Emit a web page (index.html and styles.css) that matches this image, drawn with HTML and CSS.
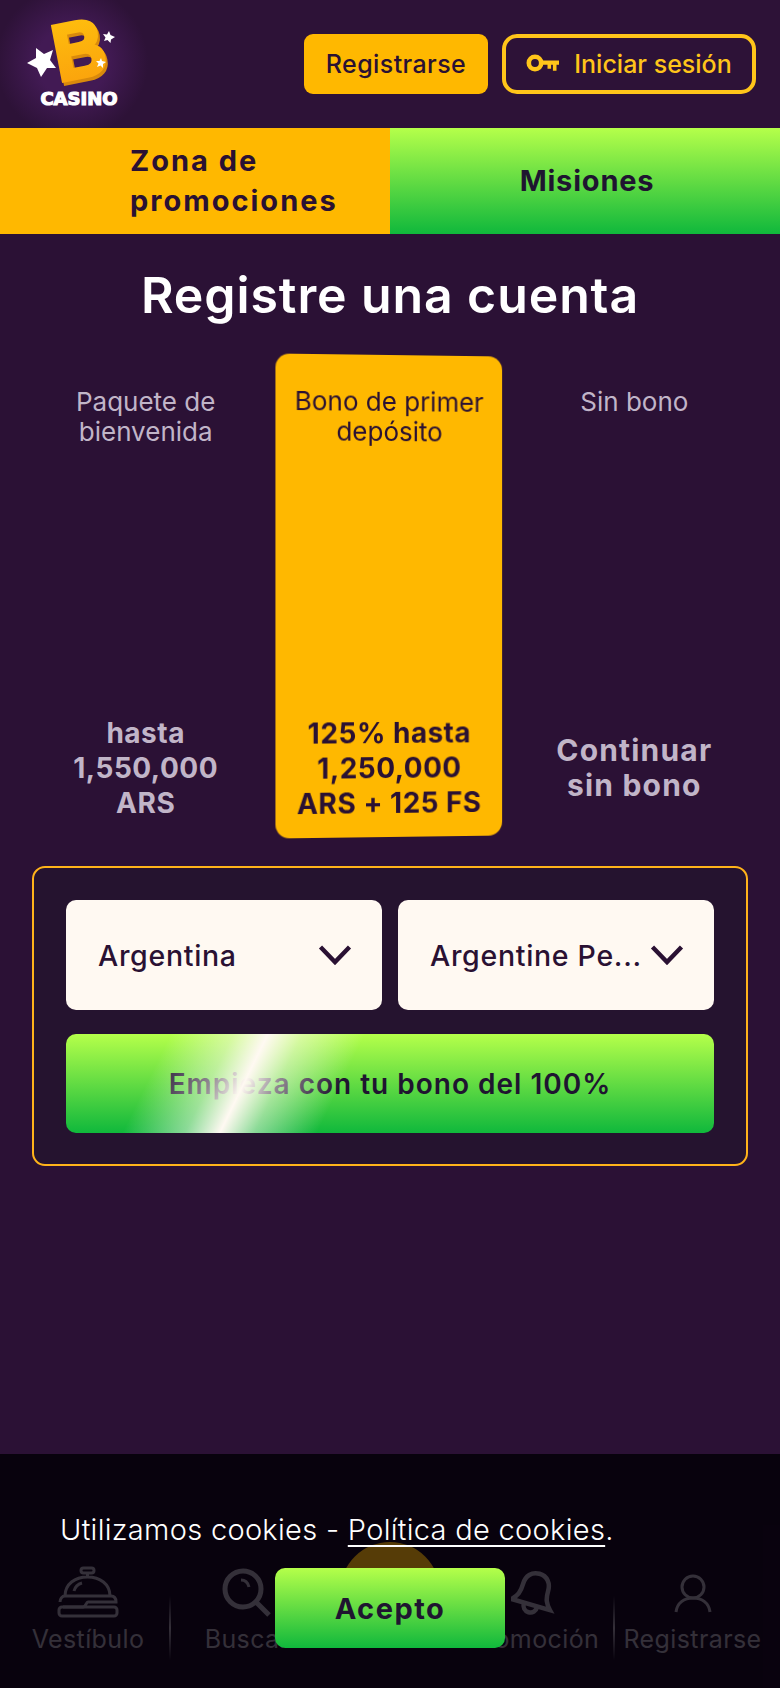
FILE: index.html
```html
<!DOCTYPE html>
<html lang="es">
<head>
<meta charset="utf-8">
<title>Registre una cuenta</title>
<link rel="stylesheet" href="styles.css">
</head>
<body>
<div class="page">
  <header class="header">
    <div class="logo">
      <svg width="150" height="128" viewBox="0 0 150 128" aria-label="B Casino">
        <defs>
          <linearGradient id="bfill" x1="0" y1="0" x2="0" y2="1">
            <stop offset="0" stop-color="#ffc20e"/>
            <stop offset="1" stop-color="#fa9f0c"/>
          </linearGradient>
        </defs>
        <text class="logo-b logo-b-side" text-anchor="middle" y="28" transform="translate(81 52) rotate(-11) scale(.9 1)">B</text>
        <text class="logo-b logo-b-face" text-anchor="middle" y="28" transform="translate(79 49) rotate(-11) scale(.9 1)" fill="url(#bfill)" stroke="url(#bfill)">B</text>
        <polygon class="star" points="36,48 44,54 53,50 50,60 56,68 47,68 41,77 37,68 27,63 36,58"/>
        <polygon class="star" points="109,31 110.500,35 115,37 111,39.500 110.500,43 107.500,40 104,41 105.500,37.500 103,34 107,34.500"/>
        <polygon class="star" points="101,58 102,61 106,62 103,64 103,68 100.500,65.500 97,67 98.500,63.500 96,61 99.500,61"/>
        <text class="logo-word" x="79" y="104.500" text-anchor="middle">CASINO</text>
      </svg>
    </div>
    <div class="auth">
      <a class="btn btn-register">Registrarse</a>
      <a class="btn btn-login">
        <svg class="key" width="34" height="20" viewBox="0 0 34 20"><circle cx="9" cy="9" r="6.200" fill="none" stroke="currentColor" stroke-width="4.600"/><path d="M15 6.500h18v4.200h-2.500v6h-3.600v-6h-1.800v4h-3.600v-4H15z" fill="currentColor"/></svg>
        <span>Iniciar sesión</span>
      </a>
    </div>
  </header>

  <nav class="tabs">
    <a class="tab tab-promo"><span class="tab-label">Zona de promociones</span></a>
    <a class="tab tab-missions"><span>Misiones</span></a>
  </nav>

  <main class="main">
    <h1 class="title">Registre una cuenta</h1>
    <section class="bonuses">
      <article class="bonus">
        <h2 class="bonus-name">Paquete de bienvenida</h2>
        <p class="bonus-value">hasta 1,550,000 ARS</p>
      </article>
      <article class="bonus bonus-active">
        <h2 class="bonus-name">Bono de primer depósito</h2>
        <p class="bonus-value">125% hasta 1,250,000 ARS + 125 FS</p>
      </article>
      <article class="bonus">
        <h2 class="bonus-name">Sin bono</h2>
        <p class="bonus-value bonus-value-wide">Continuar<br>sin bono</p>
      </article>
    </section>
    <section class="form">
      <div class="selects">
        <div class="select"><span class="select-text">Argentina</span>
          <svg class="chevron" width="34" height="22" viewBox="0 0 34 22"><path d="M2.500 3 17 18 31.500 3" fill="none" stroke="currentColor" stroke-width="4.400"/></svg>
        </div>
        <div class="select"><span class="select-text">Argentine Pe...</span>
          <svg class="chevron" width="34" height="22" viewBox="0 0 34 22"><path d="M2.500 3 17 18 31.500 3" fill="none" stroke="currentColor" stroke-width="4.400"/></svg>
        </div>
      </div>
      <a class="cta">Empieza con tu bono del 100%</a>
    </section>
  </main>

  <nav class="bottom-nav">
    <a class="nav-item nav-first">
      <svg width="62" height="52" viewBox="0 0 62 52" fill="none" stroke="currentColor" stroke-width="3"><rect x="24" y="2" width="13" height="5" rx="2.500"/><path d="M30.500 7v4M8 30c0-12 10-19 22.500-19S53 18 53 30"/><path d="M3 36c0-3 2-6 5-6h46c3 0 5 2 5 6H31c-2 0-2 5-5 5H6"/><rect x="2" y="41" width="58" height="9" rx="3"/><path d="M17 25c1-4 4-7 8-8"/></svg>
      <span>Vestíbulo</span>
    </a>
    <a class="nav-item nav-sep">
      <svg width="50" height="50" viewBox="0 0 50 50" fill="none" stroke="currentColor" stroke-width="5"><circle cx="21" cy="21" r="18"/><path d="M34 34 47 47"/><path d="M19 12c4 0 7 3 8 7" stroke-width="3"/></svg>
      <span>Buscar</span>
    </a>
    <a class="nav-item nav-center"><i class="nav-disc"></i></a>
    <a class="nav-item">
      <svg width="46" height="50" viewBox="0 0 46 50" fill="none" stroke="currentColor" stroke-width="4.500"><g transform="rotate(16 23 25)"><path d="M23 5c-8 0-13 6-13 14 0 9-2 13-7 18h40c-5-5-7-9-7-18 0-8-5-14-13-14z"/><path d="M16 37c0 5 3 8 7 8s7-3 7-8"/></g></svg>
      <span>Promoción</span>
    </a>
    <a class="nav-item nav-sep nav-last">
      <svg class="nav-user" width="38" height="40" viewBox="0 0 38 40" fill="none" stroke="currentColor" stroke-width="3"><circle cx="19" cy="13" r="11"/><path d="M2 38c1-9 8-14 17-14s16 5 17 14"/></svg>
      <span>Registrarse</span>
    </a>
  </nav>

  <aside class="cookies">
    <p class="cookies-text">Utilizamos cookies - <a class="cookies-link">Política de cookies</a>.</p>
    <a class="cookies-accept">Acepto</a>
  </aside>
</div>
</body>
</html>
```
FILE: styles.css
```css
* { box-sizing: border-box; }
html, body { margin: 0; padding: 0; }
body {
  background: #2d1237;
  font-family: Inter, "Noto Sans", "Liberation Sans", sans-serif;
  color: #2a1133;
}
.page {
  position: relative;
  width: 780px;
  height: 1688px;
  overflow: hidden;
  background: #2b1135;
}

/* header */
.header {
  height: 128px;
  display: flex;
  align-items: center;
  justify-content: space-between;
  padding-right: 24px;
  background: #2d1237;
}
.logo {
  width: 150px;
  height: 128px;
  background: radial-gradient(circle at 72px 62px, #421a54 0, #421a54 35px, rgba(66, 26, 84, 0) 76px);
}
.logo svg { display: block; }
.logo-b {
  font-family: "Liberation Sans", sans-serif;
  font-weight: 700;
  font-size: 80px;
}
.logo-b-side { fill: #d98a0c; stroke: #d98a0c; stroke-width: 4; }
.logo-b-face { stroke-width: 4; }
.star { fill: #fff; }
.logo-word {
  font-family: "DejaVu Sans", sans-serif;
  font-weight: 700;
  font-size: 18px;
  fill: #fff;
  stroke: #fff;
  stroke-width: 1.200;
}
.auth { display: flex; gap: 14px; }
.btn {
  height: 60px;
  display: flex;
  align-items: center;
  justify-content: center;
  font-size: 25px;
  font-weight: 500;
}
.btn-register {
  width: 184px;
  border-radius: 9px;
  background: #ffb800;
  color: #2a1133;
  letter-spacing: .4px;
}
.btn-login {
  width: 254px;
  gap: 14px;
  border: 4px solid #ffc51a;
  border-radius: 15px;
  color: #ffc51a;
}
.key { display: block; }

/* tabs */
.tabs { display: flex; height: 106px; }
.tab {
  flex: 0 0 50%;
  display: flex;
  align-items: center;
  font-size: 29px;
  font-weight: 700;
  line-height: 40px;
  letter-spacing: .8px;
  color: #2a1133;
}
.tab-promo { padding-left: 130px; background: #ffb800; }
.tab-label { width: 230px; letter-spacing: 2px; }
.tab-missions {
  justify-content: center;
  padding-left: 4px;
  background: linear-gradient(180deg, #b5ff4a 0%, #10b83c 100%);
  color: #1f1530;
}

/* main */
.main { padding: 0 32px; }
.title {
  margin: 0;
  height: 121px;
  display: flex;
  align-items: center;
  justify-content: center;
  font-size: 50px;
  font-weight: 600;
  letter-spacing: .9px;
  color: #fff;
}
.bonuses {
  display: grid;
  grid-template-columns: repeat(3, minmax(0, 1fr));
  gap: 17px;
  height: 482px;
}
.bonus {
  display: flex;
  flex-direction: column;
  align-items: center;
  padding: 32px 14px 16px;
  border-radius: 14px;
  text-align: center;
  color: #c1b5c8;
}
.bonus-active {
  background: #ffb800;
  color: #2a1133;
  transform: perspective(1000px) rotateY(3.2deg);
}
.bonus-name {
  margin: 0;
  font-size: 26px;
  font-weight: 400;
  line-height: 30px;
}
.bonus-value {
  margin: auto 0 0;
  height: 106px;
  display: flex;
  align-items: center;
  font-size: 28px;
  font-weight: 700;
  line-height: 35px;
  letter-spacing: .5px;
}
.bonus-value-wide {
  font-size: 30px;
  letter-spacing: 1.200px;
}

/* form */
.form {
  margin-top: 29px;
  height: 300px;
  padding: 32px;
  border: 2px solid #ffb31a;
  border-radius: 13px;
  background: #25132f;
}
.selects {
  display: grid;
  grid-template-columns: repeat(2, minmax(0, 1fr));
  gap: 16px;
}
.select {
  height: 110px;
  display: flex;
  align-items: center;
  gap: 8px;
  padding: 0 30px 0 32px;
  border-radius: 10px;
  background: #fff9f2;
  color: #2a1133;
  font-size: 28.500px;
  font-weight: 500;
  letter-spacing: .7px;
}
.select-text {
  flex: 1;
  min-width: 0;
  white-space: nowrap;
}
.chevron { flex: none; display: block; }
.cta {
  position: relative;
  display: flex;
  align-items: center;
  justify-content: center;
  height: 99px;
  margin-top: 24px;
  border-radius: 10px;
  overflow: hidden;
  background: linear-gradient(180deg, #b5ff4a 0%, #10b83c 100%);
  color: #1f1530;
  font-size: 28px;
  font-weight: 600;
  letter-spacing: 1px;
}
.cta::after {
  content: "";
  position: absolute;
  inset: 0;
  background: linear-gradient(116deg,
    rgba(255,249,242,0) 15%,
    rgba(255,249,242,.5) 24%,
    rgba(255,249,242,1) 29%,
    rgba(255,249,242,.5) 34%,
    rgba(255,249,242,0) 43%);
}

/* bottom nav, under the cookie layer */
.bottom-nav {
  position: absolute;
  left: 0;
  right: 0;
  bottom: 0;
  height: 234px;
  display: grid;
  grid-template-columns: 169px 156px 130px 158px 167px;
  background: #0e0515;
  color: #97929c;
}
.nav-item {
  position: relative;
  display: flex;
  flex-direction: column;
  align-items: center;
  justify-content: flex-end;
  gap: 6px;
  padding-bottom: 34px;
  font-size: 25px;
  line-height: 30px;
  letter-spacing: .4px;
}
.nav-item svg { display: block; }
.nav-first { padding-left: 7px; }
.nav-last { padding-right: 8px; }
.nav-user { margin-bottom: 4px; }
.nav-sep::before {
  content: "";
  position: absolute;
  left: 0;
  bottom: 28px;
  height: 64px;
  width: 2px;
  background: linear-gradient(180deg, rgba(151,146,156,0), #97929c 50%, rgba(151,146,156,0));
}
.nav-disc {
  position: absolute;
  bottom: 46px;
  left: 15px;
  width: 100px;
  height: 100px;
  border-radius: 50%;
  background: #ffb800;
}

/* cookies */
.cookies {
  position: absolute;
  left: 0;
  right: 0;
  bottom: 0;
  height: 234px;
  display: flex;
  flex-direction: column;
  align-items: center;
  padding-top: 52px;
  background: rgba(6, 1, 10, .68);
}
.cookies-text {
  align-self: stretch;
  margin: 0;
  padding-left: 60px;
  color: #fff;
  font-size: 29px;
  font-weight: 300;
  line-height: 48px;
  letter-spacing: .3px;
}
.cookies-link {
  text-decoration: underline;
  text-decoration-thickness: 2px;
  text-underline-offset: 5px;
}
.cookies-accept {
  display: flex;
  align-items: center;
  justify-content: center;
  width: 230px;
  height: 80px;
  margin-top: 14px;
  border-radius: 10px;
  background: linear-gradient(180deg, #b5ff4a 0%, #10b83c 100%);
  color: #1f1530;
  font-size: 29px;
  font-weight: 700;
  letter-spacing: 1.500px;
}
```
